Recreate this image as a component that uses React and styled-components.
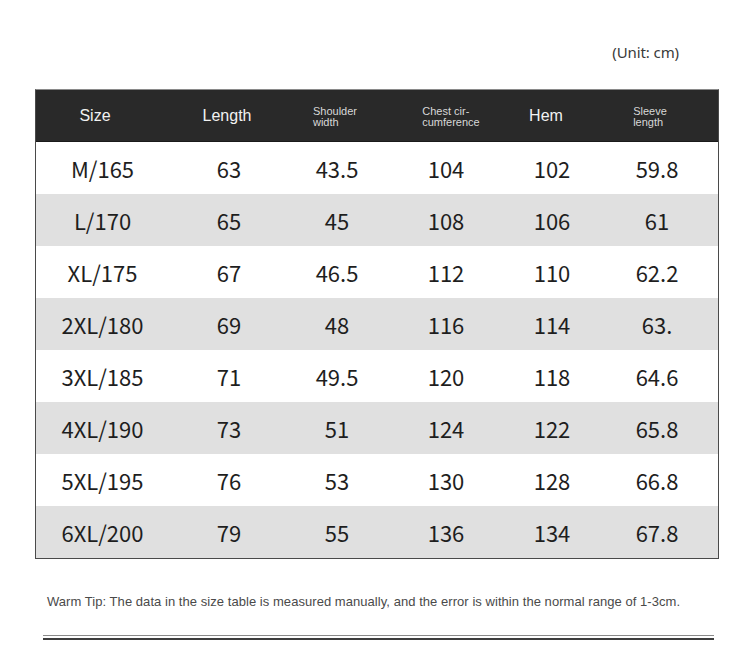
import React from 'react';
import styled, { createGlobalStyle } from 'styled-components';

const GlobalStyle = createGlobalStyle`
  html, body {
    margin: 0;
    padding: 0;
    background: #ffffff;
  }
  body {
    font-family: "Liberation Sans", Arial, sans-serif;
  }
`;

const columns = '132px 122px 94px 124px 88px 1fr';

const header = [
  { label: 'Size', shift: -7 },
  { label: 'Length', shift: -2 },
  { label: ['Shoulder', 'width'], small: true, shift: -2 },
  { label: ['Chest cir-', 'cumference'], small: true, shift: 5 },
  { label: 'Hem', shift: -6 },
  { label: ['Sleeve', 'length'], small: true, shift: -7 },
];

const rows = [
  ['M/165', '63', '43.5', '104', '102', '59.8'],
  ['L/170', '65', '45', '108', '106', '61'],
  ['XL/175', '67', '46.5', '112', '110', '62.2'],
  ['2XL/180', '69', '48', '116', '114', '63.'],
  ['3XL/185', '71', '49.5', '120', '118', '64.6'],
  ['4XL/190', '73', '51', '124', '122', '65.8'],
  ['5XL/195', '76', '53', '130', '128', '66.8'],
  ['6XL/200', '79', '55', '136', '134', '67.8'],
];

const Page = styled.div`
  width: 750px;
  height: 662px;
  padding: 0 31px 0 35px;
  box-sizing: border-box;
  overflow: hidden;
`;

const UnitRow = styled.div`
  height: 89px;
  display: flex;
  justify-content: flex-end;
  align-items: flex-start;
  padding: 41px 40px 0 0;
  box-sizing: border-box;
`;

const Unit = styled.span`
  font-family: "Noto Sans", "Liberation Sans", sans-serif;
  font-size: 15px;
  line-height: 22px;
  color: #3a3a3a;
  letter-spacing: -0.1px;
`;

const Table = styled.div`
  border: 1px solid #4a4a4a;
  border-top-color: #8a8a8a;
`;

const HeadRow = styled.div`
  display: grid;
  grid-template-columns: ${columns};
  height: 52px;
  background: #292929;
  border-bottom: 1px solid #1a1a1a;
  box-sizing: border-box;
`;

const HeadCell = styled.div`
  display: flex;
  align-items: center;
  justify-content: center;
  padding-left: ${p => (p.$shift > 0 ? p.$shift * 2 : 0)}px;
  padding-right: ${p => (p.$shift < 0 ? -p.$shift * 2 : 0)}px;
  color: ${p => (p.$small ? '#d8d8d8' : '#f2f2f2')};
  font-size: ${p => (p.$small ? '11px' : '16px')};
  line-height: ${p => (p.$small ? '11px' : '20px')};
  text-align: left;
  padding-top: ${p => (p.$small ? '2px' : '0')};
`;

const SmallLabel = styled.div`
  display: flex;
  flex-direction: column;
`;

const BodyRow = styled.div`
  display: grid;
  grid-template-columns: ${columns};
  height: 52px;
  background: ${p => (p.$shaded ? '#e0e0e0' : '#ffffff')};
`;

const Cell = styled.div`
  display: flex;
  align-items: center;
  justify-content: center;
  font-family: "Noto Sans CJK SC", "Noto Sans", sans-serif;
  font-size: 22px;
  color: #1e1e1e;
  padding-left: ${p => (p.$first ? '1px' : '0')};
`;

const Tip = styled.p`
  margin: 34px 0 0 12px;
  font-size: 13px;
  line-height: 18px;
  color: #4a4a4a;
  letter-spacing: 0.05px;
  white-space: nowrap;
`;

const Rule = styled.div`
  margin: 24px 5px 0 8px;
  height: 2px;
  border-top: 1px solid #8a8a8a;
  border-bottom: 2px solid #3e3e3e;
`;

const App = () => (
  <>
    <GlobalStyle />
    <Page>
      <UnitRow>
        <Unit>(Unit: cm)</Unit>
      </UnitRow>
      <Table>
        <HeadRow>
          {header.map((h, i) => (
            <HeadCell key={i} $small={h.small} $shift={h.shift}>
              {h.small ? (
                <SmallLabel>
                  {h.label.map(l => <span key={l}>{l}</span>)}
                </SmallLabel>
              ) : h.label}
            </HeadCell>
          ))}
        </HeadRow>
        {rows.map((r, i) => (
          <BodyRow key={r[0]} $shaded={i % 2 === 1}>
            {r.map((v, j) => <Cell key={j} $first={j === 0}>{v}</Cell>)}
          </BodyRow>
        ))}
      </Table>
      <Tip>Warm Tip: The data in the size table is measured manually, and the error is within the normal range of 1-3cm.</Tip>
      <Rule />
    </Page>
  </>
);

export default App;
